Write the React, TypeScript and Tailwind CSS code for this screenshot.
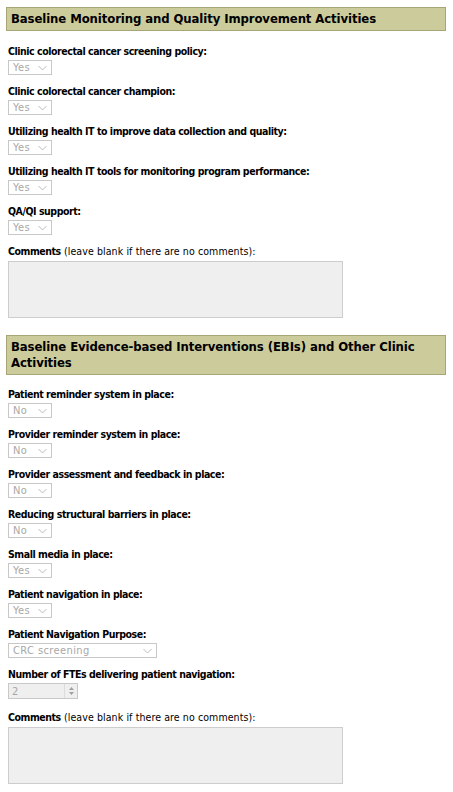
const font = { fontFamily: '"DejaVu Sans Condensed", "DejaVu Sans", Tahoma, sans-serif' };

function Chevron() {
  return (
    <svg width="9" height="6" viewBox="0 0 9 6" className="shrink-0">
      <path d="M0.5 1 L4.5 5 L8.5 1" fill="none" stroke="#bcbcbc" strokeWidth="1" />
    </svg>
  );
}

function FakeSelect({ value, wide }: { value: string; wide?: boolean }) {
  return (
    <div
      className={`mt-0.5 flex h-[15px] items-center justify-between border border-[#c8c8c8] bg-white pl-[4px] pr-[4px] text-[11px] leading-none text-[#a8a8a8] ${
        wide ? "w-[149px]" : "w-[44px]"
      }`}
    >
      <span className="tracking-[0.4px]">{value}</span>
      <Chevron />
    </div>
  );
}

function Label({ children }: { children: React.ReactNode }) {
  return (
    <div className="h-[14px] whitespace-nowrap text-[10.5px] font-bold leading-[14px] tracking-[-0.45px] text-black">
      {children}
    </div>
  );
}

function Field({ label, value }: { label: string; value: string }) {
  return (
    <div className="mb-[9px]">
      <Label>{label}</Label>
      <FakeSelect value={value} />
    </div>
  );
}

function SectionHeader({ children }: { children: React.ReactNode }) {
  return (
    <div className="border border-[#a8a677] bg-[#cccb9c] px-[4px] py-[3px] text-[13px] font-bold leading-[16px] tracking-[-0.1px] text-black">
      {children}
    </div>
  );
}

function Comments() {
  return (
    <div>
      <div className="h-[14px] whitespace-nowrap text-[10.5px] leading-[14px] tracking-[0.1px] text-black">
        <span className="font-bold tracking-[-0.45px]">Comments</span> (leave blank if there are no comments):
      </div>
      <div className="mt-[3px] h-[57px] w-[335px] border border-[#cdcdcd] bg-[#efefef]"></div>
    </div>
  );
}

export default function App() {
  const first = [
    ["Clinic colorectal cancer screening policy:", "Yes"],
    ["Clinic colorectal cancer champion:", "Yes"],
    ["Utilizing health IT to improve data collection and quality:", "Yes"],
    ["Utilizing health IT tools for monitoring program performance:", "Yes"],
    ["QA/QI support:", "Yes"],
  ];
  const second = [
    ["Patient reminder system in place:", "No"],
    ["Provider reminder system in place:", "No"],
    ["Provider assessment and feedback in place:", "No"],
    ["Reducing structural barriers in place:", "No"],
    ["Small media in place:", "Yes"],
    ["Patient navigation in place:", "Yes"],
  ];

  return (
    <div className="min-h-screen bg-white pl-[6px] pr-[7px] pt-[7px]" style={font}>
      <SectionHeader>Baseline Monitoring and Quality Improvement Activities</SectionHeader>

      <div className="ml-[2px] mt-[13px]">
        {first.map(([l, v]) => (
          <Field key={l} label={l} value={v} />
        ))}
        <Comments />
      </div>

      <div className="mt-[17px]">
        <SectionHeader>
          Baseline Evidence-based Interventions (EBIs) and Other Clinic
          <br />
          Activities
        </SectionHeader>
      </div>

      <div className="ml-[2px] mt-[12px]">
        {second.map(([l, v]) => (
          <Field key={l} label={l} value={v} />
        ))}

        <div className="mb-[9px]">
          <Label>Patient Navigation Purpose:</Label>
          <FakeSelect value="CRC screening" wide />
        </div>

        <div className="mb-[11px]">
          <Label>Number of FTEs delivering patient navigation:</Label>
          <div className="mt-0.5 flex h-[16px] w-[70px] border border-[#c8c8c8] bg-[#efefef]">
            <div className="flex flex-1 items-center pl-[3px] text-[11px] leading-none text-[#a8a8a8]">2</div>
            <div className="flex w-[13px] flex-col items-center justify-center gap-[2px] border-l border-[#dcdcdc]">
              <svg width="5" height="3" viewBox="0 0 5 3">
                <path d="M0 3 L2.5 0 L5 3 Z" fill="#a0a0a0" />
              </svg>
              <svg width="5" height="3" viewBox="0 0 5 3">
                <path d="M0 0 L2.5 3 L5 0 Z" fill="#a0a0a0" />
              </svg>
            </div>
          </div>
        </div>

        <Comments />
      </div>
    </div>
  );
}
